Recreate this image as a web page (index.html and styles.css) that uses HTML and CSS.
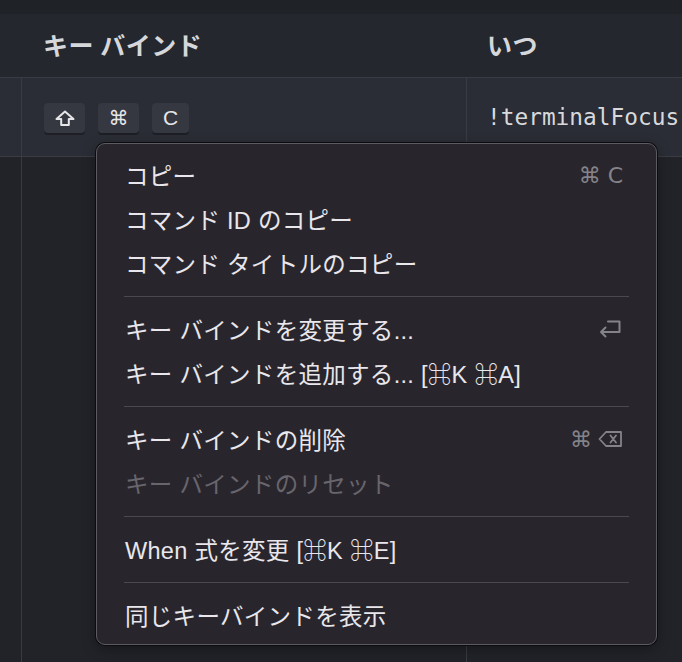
FILE: index.html
```html
<!DOCTYPE html>
<html lang="ja">
<head>
<meta charset="utf-8">
<link rel="stylesheet" href="styles.css">
</head>
<body>
<div class="page">
  <div class="topstrip"></div>
  <div class="header">
    <div class="col-gutter"></div>
    <div class="col-key"><span class="htext">キー バインド</span></div>
    <div class="col-when"><span class="htext">いつ</span></div>
  </div>
  <div class="row selected">
    <div class="col-gutter cell"></div>
    <div class="col-key cell keys">
      <span class="kbd"><svg width="20" height="17" viewBox="0 0 20 17"><path d="M10 1.5 L18.5 9 H13.8 V15 H6.2 V9 H1.5 Z" fill="none" stroke="#e6e6e8" stroke-width="2" stroke-linejoin="round"/></svg></span>
      <span class="kbd">⌘</span>
      <span class="kbd narrow">C</span>
    </div>
    <div class="col-when cell when">!terminalFocus</div>
  </div>
  <div class="row empty">
    <div class="col-gutter cell"></div>
    <div class="col-key cell"></div>
    <div class="col-when cell"></div>
  </div>

  <div class="menu">
    <div class="item"><span>コピー</span><span class="sc">⌘ C</span></div>
    <div class="item"><span>コマンド ID のコピー</span></div>
    <div class="item"><span>コマンド タイトルのコピー</span></div>
    <div class="sep"></div>
    <div class="item"><span>キー バインドを変更する...</span><span class="sc"><svg class="ret" width="24" height="20" viewBox="0 0 24 20"><path d="M10 2.5 H21.5 V13 H3 M7.5 8.5 L3 13 L7.5 17.5" fill="none" stroke="#85838a" stroke-width="2" stroke-linejoin="round" stroke-linecap="round"/></svg></span></div>
    <div class="item"><span>キー バインドを追加する... [⌘K ⌘A]</span></div>
    <div class="sep"></div>
    <div class="item"><span>キー バインドの削除</span><span class="sc">⌘<svg class="del" width="25" height="18" viewBox="0 0 25 18"><path d="M8 2 H23 V16 H8 L1.5 9 Z M12.5 5.5 L18 12.5 M18 5.5 L12.5 12.5" fill="none" stroke="#85838a" stroke-width="1.8" stroke-linejoin="round" stroke-linecap="round"/></svg></span></div>
    <div class="item disabled"><span>キー バインドのリセット</span></div>
    <div class="sep"></div>
    <div class="item"><span>When 式を変更 [⌘K ⌘E]</span></div>
    <div class="sep"></div>
    <div class="item"><span>同じキーバインドを表示</span></div>
  </div>
</div>
</body>
</html>
```

FILE: styles.css
```css
html, body {
  margin: 0;
  padding: 0;
  background: #212329;
}
.page {
  position: relative;
  width: 682px;
  height: 662px;
  overflow: hidden;
  background: #212329;
  font-family: "Noto Sans CJK JP", "DejaVu Sans", sans-serif;
}
.topstrip {
  height: 14px;
  background: #1f2227;
}
.header {
  display: flex;
  height: 63px;
  background: #24272e;
  border-bottom: 1px solid #393c43;
}
.col-gutter { width: 22px; flex: none; }
.col-key { width: 445px; flex: none; padding-left: 21px; box-sizing: border-box; }
.col-when { flex: 1; padding-left: 20px; box-sizing: border-box; }
.header .col-key, .header .col-when {
  display: flex;
  align-items: center;
  padding-bottom: 3px;
}
.htext {
  color: #d6d7da;
  font-size: 25px;
  font-weight: 700;
  letter-spacing: 0.5px;
}
.row {
  display: flex;
  height: 78px;
  border-bottom: 1px solid #393c43;
}
.row.selected { background: #2a2d35; }
.row.empty { height: 600px; background: #212329; }
.cell { border-right: 1px solid #383b42; box-sizing: border-box; }
.col-when.cell { border-right: none; }
.keys {
  display: flex;
  align-items: center;
  gap: 13px;
  padding-left: 22px;
}
.kbd {
  width: 41px;
  height: 30px;
  box-sizing: border-box;
  display: flex;
  align-items: center;
  justify-content: center;
  background: #353840;
  border-radius: 4px;
  box-shadow: 0 2px 0 #1d1f24;
  color: #e6e6e8;
  font-family: "DejaVu Sans", sans-serif;
  font-size: 20px;
  margin-top: 2px;
}
.kbd.narrow {
  width: 37px;
  font-family: "Liberation Sans", sans-serif;
  font-size: 21px;
}
.when {
  display: flex;
  align-items: center;
  font-family: "DejaVu Sans Mono", monospace;
  font-size: 22.8px;
  color: #d8d9dc;
  padding-left: 20px;
}
.menu {
  position: absolute;
  left: 96px;
  top: 143px;
  width: 561px;
  height: 502px;
  box-sizing: border-box;
  background: #28262c;
  border: 1px solid #5d5b62;
  border-radius: 9px;
  box-shadow: 0 0 0 1px #0c0c0e, 0 4px 14px rgba(0,0,0,0.35);
  padding: 9px 0 0 0;
}
.item {
  height: 44px;
  display: flex;
  align-items: center;
  justify-content: space-between;
  padding: 0 33px 0 28px;
  color: #e9e7ec;
  font-family: "Liberation Sans", "Noto Sans CJK JP", "DejaVu Sans", sans-serif;
  font-size: 23.5px;
  letter-spacing: 0.3px;
  white-space: nowrap;
}
.item.disabled { color: #68656c; }
.sc {
  display: flex;
  align-items: center;
  color: #85838a;
  font-family: "DejaVu Sans", sans-serif;
  font-size: 22px;
  letter-spacing: 0;
  gap: 6px;
}
.ret { margin-right: 1px; }
.sep {
  height: 22px;
  display: flex;
  align-items: center;
  margin: 0 27px 0 27px;
}
.sep::before {
  content: "";
  display: block;
  flex: 1;
  height: 1px;
  background: #4b4950;
}
```
